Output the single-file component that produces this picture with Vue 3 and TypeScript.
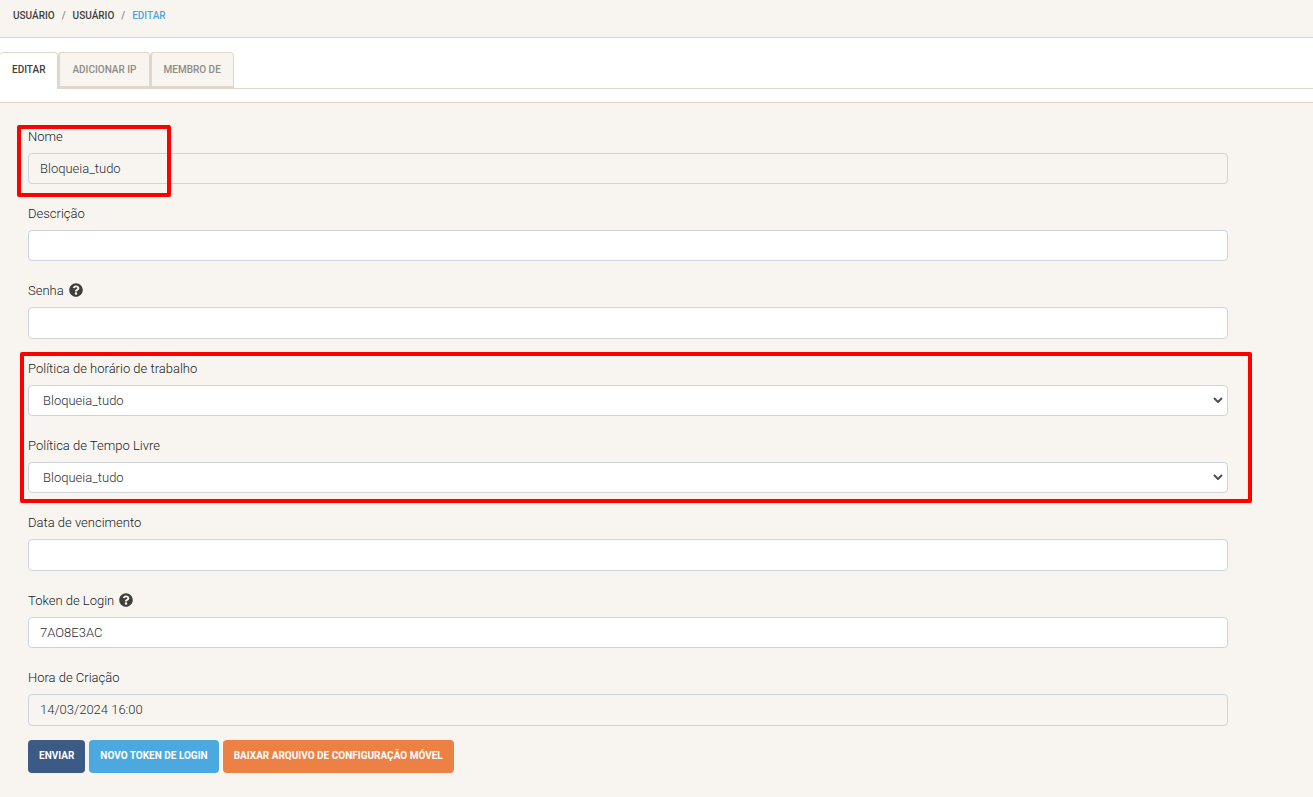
<script setup lang="ts">
import { ref } from 'vue'

interface Field {
  id: string
  label: string
  kind: 'text' | 'password' | 'select'
  readonly?: boolean
  help?: boolean
  tall?: boolean
  marked?: boolean
}

const groups: { marked: boolean; fields: Field[] }[] = [
  {
    marked: false,
    fields: [
      { id: 'nome', label: 'Nome', kind: 'text', readonly: true, marked: true },
      { id: 'descricao', label: 'Descrição', kind: 'text' },
      { id: 'senha', label: 'Senha', kind: 'password', help: true, tall: true },
    ],
  },
  {
    marked: true,
    fields: [
      { id: 'trabalho', label: 'Política de horário de trabalho', kind: 'select' },
      { id: 'livre', label: 'Política de Tempo Livre', kind: 'select' },
    ],
  },
  {
    marked: false,
    fields: [
      { id: 'vencimento', label: 'Data de vencimento', kind: 'text', tall: true },
      { id: 'token', label: 'Token de Login', kind: 'text', help: true },
      { id: 'criacao', label: 'Hora de Criação', kind: 'text', readonly: true, tall: true },
    ],
  },
]

const values = ref<Record<string, string>>({
  nome: 'Bloqueia_tudo',
  descricao: '',
  senha: '',
  trabalho: 'Bloqueia_tudo',
  livre: 'Bloqueia_tudo',
  vencimento: '',
  token: '7AO8E3AC',
  criacao: '14/03/2024 16:00',
})

const tabs = ['Editar', 'Adicionar IP', 'Membro de']
const active = ref(0)
</script>

<template>
  <div class="page">
    <nav class="crumbs" aria-label="Navegação">
      <a href="#">Usuário</a>
      <span class="sep">/</span>
      <a href="#">Usuário</a>
      <span class="sep">/</span>
      <a href="#" class="current">Editar</a>
    </nav>

    <div class="tabs" role="tablist">
      <button
        v-for="(tab, i) in tabs"
        :key="tab"
        type="button"
        role="tab"
        class="tab"
        :class="{ active: i === active }"
        :aria-selected="i === active"
        @click="active = i"
      >{{ tab }}</button>
    </div>

    <main class="panel">
      <form class="form" @submit.prevent>
        <div v-for="(group, g) in groups" :key="g" class="group">
          <div v-for="field in group.fields" :key="field.id" class="field">
            <label :for="field.id">
              {{ field.label }}
              <svg v-if="field.help" class="help" viewBox="0 0 512 512" aria-hidden="true">
                <path
                  d="M504 256c0 137-111 248-248 248S8 393 8 256 119 8 256 8s248 111 248 248zM262.700 90c-54.500 0-89.300 23-116.500 63.800-3.500 5.300-2.400 12.400 2.700 16.300l34.700 26.300c5.200 3.900 12.600 3 16.700-2.100 17.900-22.700 30.100-35.800 57.300-35.800 20.400 0 45.700 13.100 45.700 33 0 15-12.400 22.700-32.500 34C247.100 238.500 216 255 216 296v4c0 6.600 5.400 12 12 12h56c6.600 0 12-5.400 12-12v-1.300c0-28.500 83.200-29.600 83.200-106.700 0-58-60.200-102-116.500-102zM256 338c-25.400 0-46 20.600-46 46s20.600 46 46 46 46-20.600 46-46-20.600-46-46-46z"
                />
              </svg>
            </label>
            <div v-if="field.kind === 'select'" class="select">
              <select :id="field.id" v-model="values[field.id]" class="control">
                <option>Bloqueia_tudo</option>
              </select>
              <svg class="chevron" viewBox="0 0 10 6" aria-hidden="true">
                <path d="M1 1l4 4 4-4" />
              </svg>
            </div>
            <input
              v-else
              :id="field.id"
              v-model="values[field.id]"
              :type="field.kind"
              :readonly="field.readonly"
              class="control"
              :class="{ tall: field.tall }"
              autocomplete="off"
            />
            <span v-if="field.marked" class="mark mark-name"></span>
          </div>
          <span v-if="group.marked" class="mark mark-group"></span>
        </div>

        <div class="actions">
          <button type="submit" class="btn navy">Enviar</button>
          <button type="button" class="btn sky">Novo token de login</button>
          <button type="button" class="btn orange">Baixar arquivo de configuração móvel</button>
        </div>
      </form>
    </main>
  </div>
</template>

<style>
body {
  margin: 0;
  background: #fff;
}
</style>

<style scoped>
.page {
  display: flex;
  flex-direction: column;
  min-height: 100vh;
  font-family: Roboto, "Liberation Sans", sans-serif;
  font-size: 13px;
  font-weight: 300;
  color: #20211d;
}

.page * {
  box-sizing: border-box;
}

.crumbs {
  display: flex;
  align-items: center;
  gap: 7px;
  height: 38px;
  padding: 0 13px 6px;
  border-bottom: 1px solid #dfd7ca;
  background: #f8f5f0;
  font-size: 10px;
  font-weight: 500;
  text-transform: uppercase;
}

.crumbs a {
  color: #3e3f3a;
  text-decoration: none;
}

.crumbs .current {
  color: #4ca8de;
}

.sep {
  color: #8e8c84;
}

.tabs {
  display: flex;
  margin-top: 14px;
  border-bottom: 1px solid #dfd7ca;
}

.tab {
  height: 36px;
  padding: 0 12px 1px;
  border: 1px solid #dfd7ca;
  border-left-width: 2px;
  border-bottom-width: 2px;
  border-radius: 4px 4px 0 0;
  background: #f8f5f0;
  color: #8e8c84;
  font-family: inherit;
  font-size: 10px;
  font-weight: 500;
  text-transform: uppercase;
}

.tab.active {
  height: 37px;
  margin-bottom: -1px;
  padding: 0 12px 4px;
  border-left: 0;
  border-bottom: 0;
  background: #fff;
  color: #3e3f3a;
}

.panel {
  flex: 1;
  margin-top: 13px;
  padding: 23px 85px 24px 28px;
  border-top: 1px solid #dfd7ca;
  background: #f8f5f0;
}

.group {
  position: relative;
}

.field {
  position: relative;
  padding-bottom: 19px;
}

.group:nth-child(3) .field:last-child {
  padding-bottom: 14px;
}

label {
  display: flex;
  align-items: center;
  gap: 5px;
  height: 20px;
  margin-bottom: 7px;
}

.help {
  width: 14px;
  height: 14px;
  fill: #3e3f3a;
}

.control {
  display: block;
  width: 100%;
  height: 31px;
  padding: 0 11px;
  border: 1px solid #ced4da;
  border-radius: 4px;
  background: #fff;
  color: #2a2f34;
  font-family: inherit;
  font-size: 13px;
  font-weight: inherit;
}

.tall {
  height: 32px;
  padding-bottom: 1px;
}

.control:read-only:not(select) {
  background: #f8f5f0;
}

.select {
  display: grid;
  align-items: center;
}

.select > * {
  grid-area: 1 / 1;
}

select.control {
  padding: 0 14px;
  appearance: none;
}

.chevron {
  justify-self: end;
  width: 10px;
  height: 6px;
  margin: 0 5px 1px 0;
  fill: none;
  stroke: #495057;
  stroke-width: 2;
  pointer-events: none;
}

.mark {
  position: absolute;
  border: 4px solid #f00;
  border-radius: 2px;
  pointer-events: none;
}

.mark-name {
  top: -1px;
  left: -11px;
  width: 154px;
  height: 72px;
}

.mark-group {
  top: -6px;
  right: -24px;
  bottom: 9px;
  left: -8px;
}

.actions {
  display: flex;
  gap: 4px;
}

.btn {
  height: 33px;
  padding: 0 11px 2px;
  border: 0;
  border-radius: 4px;
  color: #fff;
  font-family: inherit;
  font-size: 10px;
  font-weight: 700;
  text-transform: uppercase;
}

.navy {
  background: #3c5a86;
}

.sky {
  background: #4ba9e0;
}

.orange {
  background: #ed8145;
}
</style>
